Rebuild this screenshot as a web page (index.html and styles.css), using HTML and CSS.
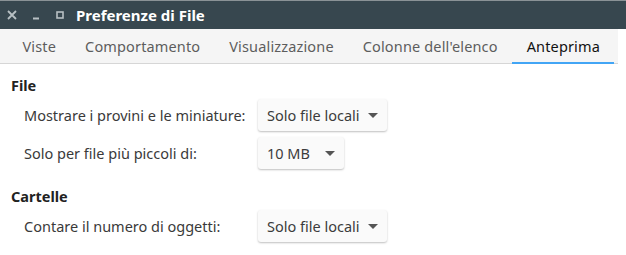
FILE: index.html
```html
<!DOCTYPE html>
<html>
<head>
    <title>Preferenze di File</title>
    <link rel="stylesheet" href="styles.css">
</head>
<body>
    <div class="window">
        <div class="titlebar">
            <div class="controls">
                <svg class="ctl" width="12" height="12" viewBox="0 0 12 12"><path d="M2 2 L10 10 M10 2 L2 10" stroke="#b8c0c4" stroke-width="1.8"/></svg>
                <svg class="ctl" width="12" height="12" viewBox="0 0 12 12"><path d="M3 9.5 H9" stroke="#b8c0c4" stroke-width="2"/></svg>
                <svg class="ctl" width="12" height="12" viewBox="0 0 12 12"><rect x="3" y="3" width="6" height="6" fill="none" stroke="#b8c0c4" stroke-width="1.6"/></svg>
            </div>
            <span class="title">Preferenze di File</span>
        </div>

        <div class="tabs">
            <div class="tab">Viste</div>
            <div class="tab">Comportamento</div>
            <div class="tab">Visualizzazione</div>
            <div class="tab">Colonne dell'elenco</div>
            <div class="tab active">Anteprima</div>
        </div>

        <div class="content">
            <h3>File</h3>
            <div class="row">
                <span class="label">Mostrare i provini e le miniature:</span>
                <button class="combo">Solo file locali <span class="arrow"></span></button>
            </div>
            <div class="row">
                <span class="label">Solo per file più piccoli di:</span>
                <button class="combo small">10 MB <span class="arrow"></span></button>
            </div>

            <h3 class="second">Cartelle</h3>
            <div class="row">
                <span class="label">Contare il numero di oggetti:</span>
                <button class="combo">Solo file locali <span class="arrow"></span></button>
            </div>
        </div>
    </div>
</body>
</html>
```

FILE: styles.css
```css
* {
    margin: 0;
    padding: 0;
    box-sizing: border-box;
    font-family: 'Noto Sans', sans-serif;
}

body {
    background: #ffffff;
    width: 626px;
    height: 255px;
    overflow: hidden;
}

.window {
    border-top: 1px solid #8a9296;
}

.titlebar {
    height: 28px;
    background: #37474f;
    display: flex;
    align-items: center;
    padding-left: 6px;
}

.controls {
    display: flex;
    gap: 12px;
    margin-right: 10px;
}

.title {
    color: #ffffff;
    font-size: 15px;
    font-weight: 700;
}

.tabs {
    height: 35px;
    background: #f5f5f5;
    border-bottom: 1px solid #d6d6d6;
    display: flex;
    padding-left: 8px;
    margin-right: 8px;
}

.tab {
    font-size: 14.5px;
    letter-spacing: 0.15px;
    color: #5d5d5d;
    padding: 0 14.5px;
    display: flex;
    align-items: center;
    margin-bottom: -1px;
    border-bottom: 2px solid transparent;
}

.tab.active {
    color: #111111;
    border-bottom-color: #42a5f5;
}

.content {
    padding: 11px 11px;
}

h3 {
    font-size: 14.5px;
    line-height: 20px;
    font-weight: 700;
    color: #222222;
    margin-bottom: 4px;
}

h3.second {
    margin-top: 17px;
}

.row {
    display: flex;
    align-items: center;
    padding-left: 13px;
    margin-bottom: 6px;
}

.label {
    width: 234px;
    font-size: 14.5px;
    color: #3a3a3a;
}

.combo {
    height: 32px;
    width: 129px;
    background: #fafafa;
    border: none;
    border-radius: 3px;
    box-shadow: 0 1px 2px rgba(0, 0, 0, 0.25);
    font-size: 14.5px;
    color: #3c3c3c;
    display: flex;
    align-items: center;
    justify-content: space-between;
    padding: 0 9px;
}

.combo.small {
    width: 86px;
}

.arrow {
    width: 0;
    height: 0;
    border-left: 5px solid transparent;
    border-right: 5px solid transparent;
    border-top: 5px solid #555555;
}
```
